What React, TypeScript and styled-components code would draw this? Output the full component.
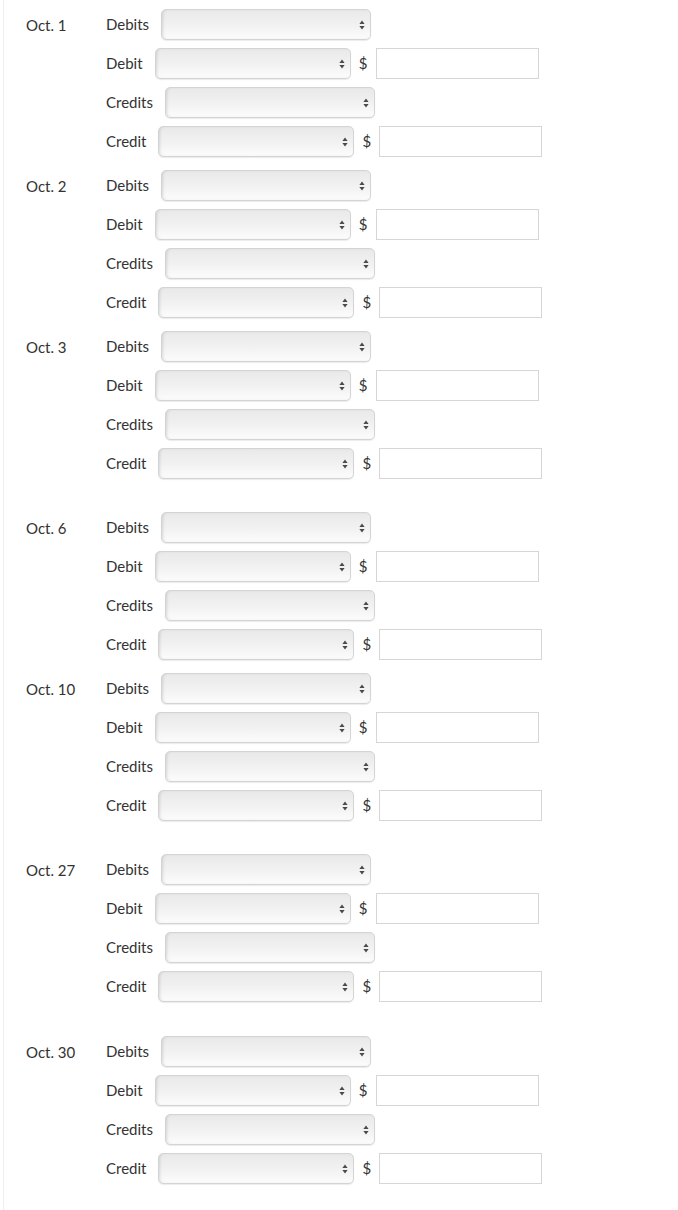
import React from 'react';
import styled, { createGlobalStyle } from 'styled-components';

const GlobalStyle = createGlobalStyle`
    html, body {
        margin: 0;
        padding: 0;
        background: #ffffff;
    }
    body {
        font-family: Lato, "Open Sans", "Liberation Sans", sans-serif;
        color: #333333;
    }
`;

type Entry = { date: string; extra?: number };

const entries: Entry[] = [
    { date: 'Oct. 1' },
    { date: 'Oct. 2' },
    { date: 'Oct. 3', extra: 20 },
    { date: 'Oct. 6' },
    { date: 'Oct. 10', extra: 20 },
    { date: 'Oct. 27', extra: 21 },
    { date: 'Oct. 30' },
];

const SelectArrows = () => (
    <ArrowWrap>
        <svg width="6" height="10" viewBox="0 0 6 10">
            <polygon points="3,0.5 5.6,4 0.4,4" fill="#4a4a4a" />
            <polygon points="3,9.5 5.6,6 0.4,6" fill="#4a4a4a" />
        </svg>
    </ArrowWrap>
);

const Dropdown = ({ width }: { width: number }) => (
    <SelectBox $width={width}>
        <NativeSelect defaultValue="">
            <option value=""></option>
        </NativeSelect>
        <SelectArrows />
    </SelectBox>
);

const App = () => {
    return (
        <>
            <GlobalStyle />
            <Page>
                <Sheet>
                    {entries.map((e) => (
                        <Block key={e.date} $extra={e.extra || 0}>
                            <DateCell>{e.date}</DateCell>
                            <Rows>
                                <Row>
                                    <RowLabel>Debits</RowLabel>
                                    <Dropdown width={210} />
                                </Row>
                                <Row>
                                    <RowLabel>Debit</RowLabel>
                                    <Dropdown width={196} />
                                    <Dollar>$</Dollar>
                                    <AmountInput type="text" />
                                </Row>
                                <Row>
                                    <RowLabel>Credits</RowLabel>
                                    <Dropdown width={210} />
                                </Row>
                                <Row>
                                    <RowLabel>Credit</RowLabel>
                                    <Dropdown width={196} />
                                    <Dollar>$</Dollar>
                                    <AmountInput type="text" />
                                </Row>
                            </Rows>
                        </Block>
                    ))}
                </Sheet>
            </Page>
        </>
    );
};

export default App;

const Page = styled.div`
    width: 678px;
    min-height: 1210px;
    padding-left: 3px;
    box-sizing: border-box;
`;

const Sheet = styled.div`
    border-left: 1px solid #f0f0f0;
    min-height: 1210px;
    padding-top: 9px;
    box-sizing: border-box;
`;

const Block = styled.div<{ $extra: number }>`
    display: flex;
    align-items: flex-start;
    margin-bottom: ${(p) => 13 + p.$extra}px;
`;

const DateCell = styled.div`
    width: 80px;
    padding-left: 22px;
    padding-top: 1px;
    height: 31px;
    line-height: 31px;
    font-size: 15px;
    color: #333;
    flex-shrink: 0;
`;

const Rows = styled.div`
    display: flex;
    flex-direction: column;
    gap: 8px;
`;

const Row = styled.div`
    display: flex;
    align-items: center;
    height: 31px;
`;

const RowLabel = styled.span`
    font-size: 15px;
    line-height: 18px;
    margin-top: -2px;
    color: #333;
    margin-right: 12px;
    white-space: nowrap;
`;

const SelectBox = styled.div<{ $width: number }>`
    position: relative;
    width: ${(p) => p.$width}px;
    height: 31px;
    flex-shrink: 0;
`;

const NativeSelect = styled.select`
    appearance: none;
    -webkit-appearance: none;
    width: 100%;
    height: 100%;
    margin: 0;
    border: 1px solid #d4d4d4;
    border-radius: 5px;
    background: linear-gradient(to bottom, #e9e9e9 0%, #f1f1f1 50%, #fcfcfc 100%);
    box-shadow: inset 2px 0 3px -1px rgba(0, 0, 0, 0.12), 0 1px 1px rgba(0, 0, 0, 0.08);
    font-family: Lato, "Liberation Sans", sans-serif;
    font-size: 15px;
    color: #333;
    outline: none;
`;

const ArrowWrap = styled.span`
    position: absolute;
    right: 6px;
    top: 50%;
    transform: translateY(-50%);
    display: flex;
    pointer-events: none;
`;

const Dollar = styled.span`
    font-size: 15px;
    color: #333;
    margin: -2px 8px 0 8px;
    width: 9px;
    text-align: center;
`;

const AmountInput = styled.input`
    width: 163px;
    height: 31px;
    box-sizing: border-box;
    margin: 0;
    border: 1px solid #d6d6d6;
    border-radius: 0;
    background: #fff;
    outline: none;
    font-family: Lato, "Liberation Sans", sans-serif;
    font-size: 15px;
    padding: 0 6px;
`;
